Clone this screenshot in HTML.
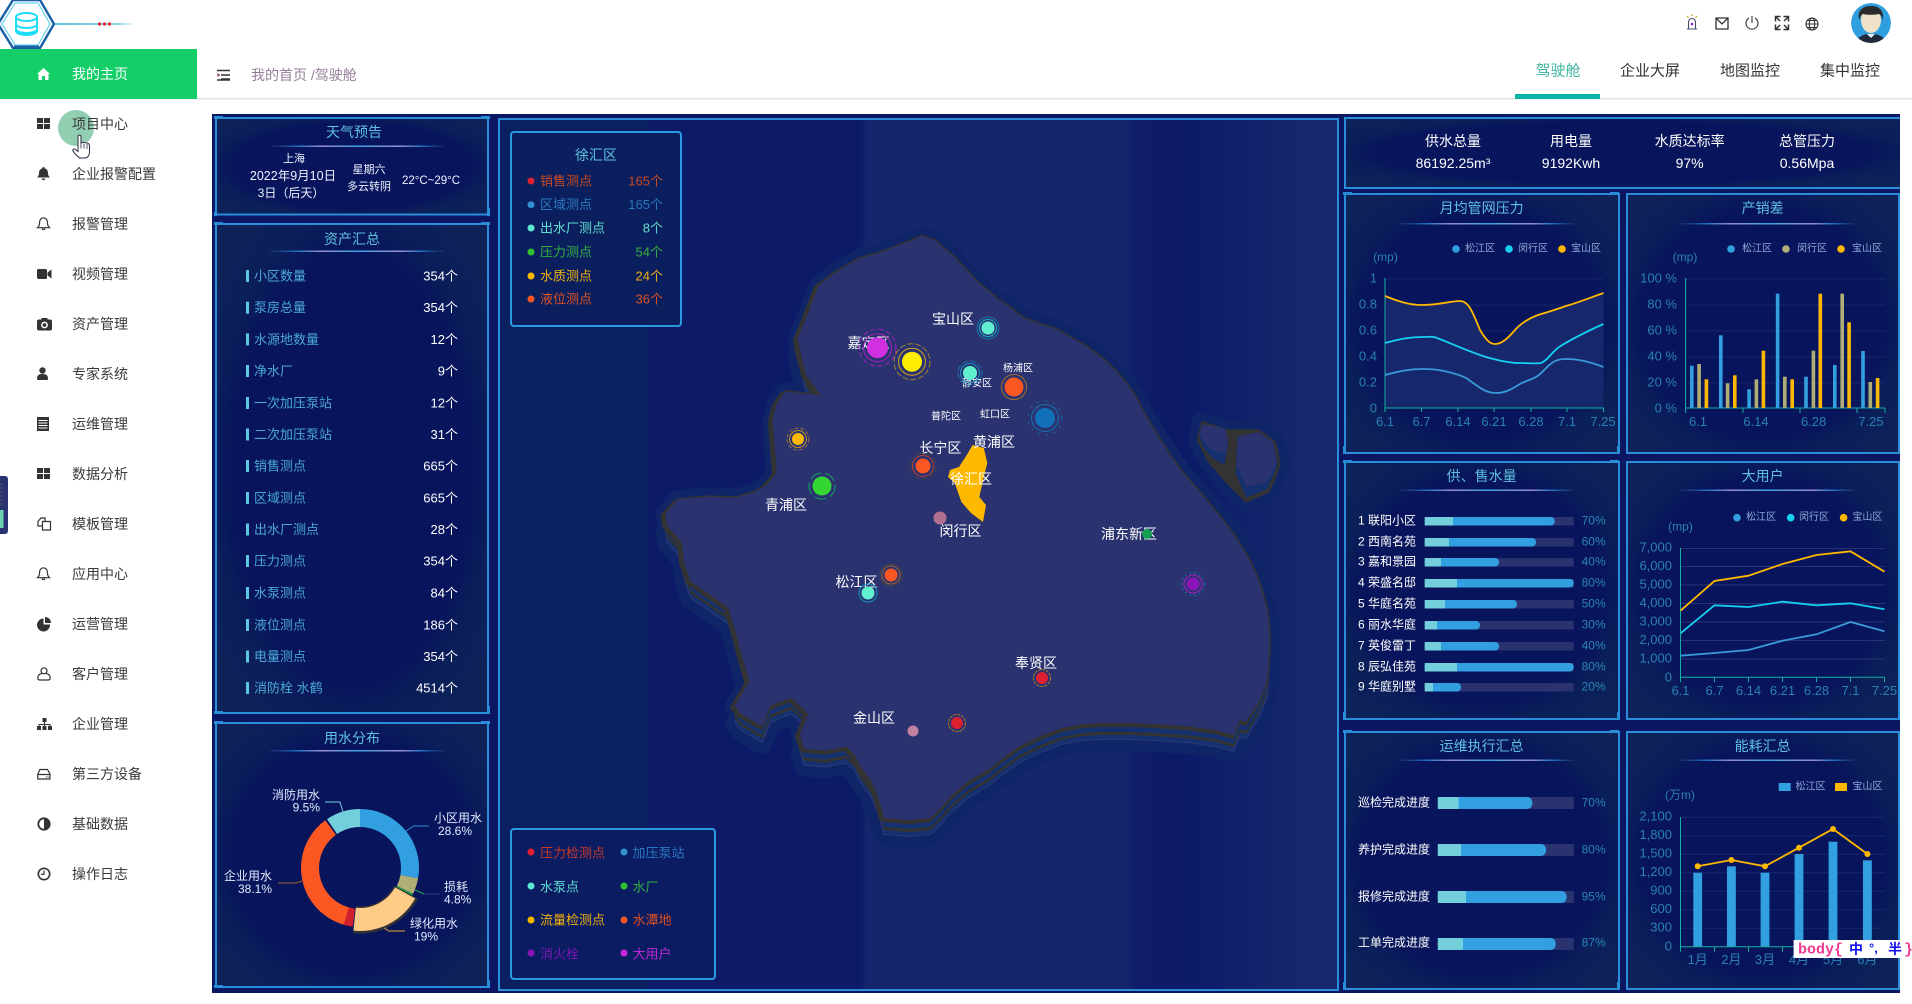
<!DOCTYPE html>
<html lang="zh"><head><meta charset="utf-8"><title>驾驶舱</title>
<style>
html,body{margin:0;padding:0;background:#fff;width:1912px;height:1004px;overflow:hidden}
svg{display:block;position:absolute;left:0;top:0}
text{font-family:"Liberation Sans","Noto Sans CJK SC",sans-serif;dominant-baseline:central;font-size:13px}
.nav text{font-size:14px;fill:#3a3a3a}
.t{font-size:14px;fill:#5fc0e0;text-anchor:middle}
.a{fill:#4aa8d8}
.v{fill:#fff;text-anchor:end}
.l{font-size:14px;fill:#fff;text-anchor:middle}
.s{font-size:10px;fill:#fff;text-anchor:middle}
.ax{font-size:13px;fill:#2a80b4}
.axe{font-size:13px;fill:#2a80b4;text-anchor:end}
.axm{font-size:13px;fill:#2a80b4;text-anchor:middle}
.lg{font-size:10px;fill:#8fa8d8}
.w{font-size:12px;fill:#fff}
.d{font-size:12px;fill:#e2eaff}
.p{font-size:12px;fill:#2a85b8}
.grid{stroke:#1f2c70;stroke-width:1}
.ring{fill:none;stroke-width:1}
.ico{fill:#333}
.icl{fill:none;stroke:#333;stroke-width:1.2}
.tab{font-size:15px;fill:#333;text-anchor:middle}
</style></head><body>
<svg width="1912" height="1004" viewBox="0 0 1912 1004" xmlns="http://www.w3.org/2000/svg">
<defs>
<radialGradient id="pg" cx="50%" cy="50%" r="65%"><stop offset="0" stop-color="#08155c"/><stop offset=".68" stop-color="#08155c"/><stop offset=".82" stop-color="#0b2059"/><stop offset="1" stop-color="#0c2259"/></radialGradient>
<linearGradient id="ul"><stop offset="0" stop-color="#2a3a80" stop-opacity=".4"/><stop offset=".15" stop-color="#1a70c0"/><stop offset=".3" stop-color="#9a8fd0"/><stop offset=".5" stop-color="#3aa0e0"/><stop offset=".75" stop-color="#9a8fd0"/><stop offset=".88" stop-color="#1a70c0"/><stop offset="1" stop-color="#2a3a80" stop-opacity=".4"/></linearGradient>
<linearGradient id="ln"><stop offset="0" stop-color="#5cc3dc"/><stop offset=".8" stop-color="#8fd8ea"/><stop offset="1" stop-color="#e0f6fb"/></linearGradient>
<linearGradient id="mb" gradientUnits="userSpaceOnUse" x1="498" x2="1338" y1="0" y2="0">
<stop offset="0" stop-color="#0c1a68"/><stop offset=".43" stop-color="#0c1a68"/><stop offset=".44" stop-color="#15266e"/><stop offset=".745" stop-color="#15266e"/><stop offset=".76" stop-color="#0e1c69"/><stop offset=".81" stop-color="#0c1a68"/><stop offset=".87" stop-color="#0f1f6a"/><stop offset=".95" stop-color="#16276e"/><stop offset="1" stop-color="#16276e"/></linearGradient>
<clipPath id="av"><circle cx="1871" cy="23" r="20"/></clipPath>
<polygon id="land" points="670,40 700,50 745,90 800,150 850,195 880,215 910,240 950,255 990,268 1060,310 1100,340 1130,370 1155,400 1175,430 1200,478 1230,530 1260,578 1290,620 1340,680 1380,730 1410,770 1440,820 1460,860 1478,910 1490,960 1495,1010 1495,1050 1490,1130 1470,1180 1440,1230 1425,1225 1410,1262 1370,1250 1300,1240 1225,1235 1160,1232 1100,1232 1050,1235 1000,1245 950,1265 900,1290 860,1320 830,1345 780,1375 740,1410 715,1440 690,1465 640,1470 580,1465 565,1410 550,1375 525,1340 510,1310 490,1290 440,1300 390,1295 380,1260 400,1210 360,1170 310,1190 290,1240 240,1210 225,1190 260,1130 240,1060 225,1000 210,950 120,885 105,840 100,790 65,750 60,720 90,685 160,678 230,680 270,668 300,650 325,620 320,550 315,490 325,450 345,420 430,430 395,380 380,320 375,290 395,240 425,160 470,125 520,95 570,80 610,65"/>
</defs>

<!-- header -->
<rect x="0" y="98" width="1912" height="1.5" fill="#e4e6ef"/>
<polygon points="-2,24 13,0 40,0 54,24 40,48 13,48" fill="#fff" stroke="#1c5fa6" stroke-width="2.4"/>
<polygon points="2,24 15,3 38,3 50,24 38,45 15,45" fill="none" stroke="#62d4ee" stroke-width="1.2"/>
<rect x="14" y="45.5" width="25" height="3" fill="#1c5fa6"/>
<g fill="none" stroke="#1ddcf5" stroke-width="2">
<ellipse cx="26.5" cy="17" rx="10.5" ry="4"/>
<path d="M16 17v14c0 2.3 4.7 4 10.5 4s10.500-1.700 10.500-4V17M16 24c0 2.300 4.700 4 10.500 4s10.500-1.700 10.500-4M16 29c0 2.300 4.700 4 10.500 4s10.500-1.700 10.500-4"/>
</g>
<rect x="55" y="23" width="77" height="2" fill="url(#ln)"/>
<g fill="#e0242a"><circle cx="99.500" cy="24" r="1.600"/><circle cx="104.500" cy="24" r="1.600"/><circle cx="109.500" cy="24" r="1.600"/></g>

<rect x="0" y="49" width="197" height="50" fill="#14cf68"/>
<g class="nav">
<text x="72" y="74" style="fill:#fff">我的主页</text>
<circle cx="76" cy="128" r="18" fill="#92cfb2"/>
<text x="72" y="124">项目中心</text><text x="72" y="174">企业报警配置</text><text x="72" y="224">报警管理</text><text x="72" y="274">视频管理</text><text x="72" y="324">资产管理</text><text x="72" y="374">专家系统</text><text x="72" y="424">运维管理</text><text x="72" y="474">数据分析</text><text x="72" y="524">模板管理</text><text x="72" y="574">应用中心</text><text x="72" y="624">运营管理</text><text x="72" y="674">客户管理</text><text x="72" y="724">企业管理</text><text x="72" y="774">第三方设备</text><text x="72" y="824">基础数据</text><text x="72" y="874">操作日志</text>
</g>
<!-- nav icons -->
<g transform="translate(37,67)"><path fill="#fff" d="M6.500 1L13 7H11.500V13H8V9H5V13H1.500V7H0Z"/></g>
<g transform="translate(37,117)" class="ico"><rect y="1" width="6" height="5"/><rect x="7" y="1" width="6" height="5"/><rect y="7" width="6" height="5"/><rect x="7" y="7" width="6" height="5"/></g>
<g transform="translate(37,167)" class="ico"><path d="M6.500 0a1 1 0 0 1 1 1.200c2.500.6 3.500 2.600 3.500 5 0 2 1 3.300 2 4.300H0c1-1 2-2.300 2-4.300 0-2.400 1-4.400 3.500-5a1 1 0 0 1 1-1.200zM4.800 11.500h3.400a1.700 1.700 0 0 1-3.400 0z"/></g>
<g transform="translate(37,217)" class="icl"><path d="M6.500 .8c2.800.3 4 2.500 4 5.200 0 2.200.8 3.600 2 4.700H.5c1.200-1.100 2-2.500 2-4.700 0-2.700 1.200-4.900 4-5.200zM5 11.500a1.600 1.600 0 0 0 3 0"/></g>
<g transform="translate(37,267)" class="ico"><rect y="2" width="10" height="10" rx="1.500"/><polygon points="10.500,5.500 14.500,2.500 14.500,11.500 10.500,8.500"/></g>
<g transform="translate(37,317)"><rect y="2.500" width="15" height="11" rx="2" fill="#333"/><rect x="4.500" y="1" width="6" height="3" fill="#333"/><circle cx="7.500" cy="8" r="3.400" fill="#fff"/><circle cx="7.500" cy="8" r="1.900" fill="#333"/></g>
<g transform="translate(37,367)" class="ico"><circle cx="5.500" cy="3.500" r="3.200"/><path d="M0 12c0-3.500 1.500-5 5.500-5s5.500 1.500 5.500 5c0 .8-.6 1-1.500 1h-8C.6 13 0 12.800 0 12z"/></g>
<g transform="translate(37,417)"><rect width="12" height="14" fill="#333"/><path d="M1.500 3.500h9M1.500 6h9M1.500 8.500h9M1.500 11h9" stroke="#fff" stroke-width="1"/></g>
<g transform="translate(37,467)" class="ico"><rect y="1" width="6" height="5"/><rect x="7" y="1" width="6" height="5"/><rect y="7" width="6" height="5"/><rect x="7" y="7" width="6" height="5"/></g>
<g transform="translate(37,517)" class="icl"><path d="M5.500 4.500H13.500V13H5.500ZM5.500 9H1V4.500L4 1H8V4.500"/></g>
<g transform="translate(37,567)" class="icl"><path d="M6.500 .8c2.800.3 4 2.500 4 5.200 0 2.200.8 3.600 2 4.700H.5c1.200-1.100 2-2.500 2-4.700 0-2.700 1.200-4.900 4-5.200zM5 11.500a1.600 1.600 0 0 0 3 0"/></g>
<g transform="translate(37,617)" class="ico"><path d="M6.500 1.500V7.500H13A6.500 6.500 0 1 1 6.500 1.500zM8 0a6 6 0 0 1 6 6H8z"/></g>
<g transform="translate(37,667)" class="icl"><circle cx="7" cy="3.800" r="3"/><path d="M4.800 6.500C2 7 .8 8.500.8 11c0 1.300.7 2 2 2h8.400c1.300 0 2-.7 2-2 0-2.500-1.200-4-4-4.500"/></g>
<g transform="translate(37,717)" class="ico"><rect x="5.500" y="1" width="4" height="4"/><rect y="9" width="4" height="4"/><rect x="5.500" y="9" width="4" height="4"/><rect x="11" y="9" width="4" height="4"/><path d="M7 5h1v2h5.500v2h-1V8H8v1H7V8H2.500v1h-1V7H7z"/></g>
<g transform="translate(37,767)" class="icl"><path d="M3 2.500H10.500L13 7V12H.8V7ZM.8 7.500H13"/><path d="M9 10h1.500M11.300 10h.7" stroke-width="1"/></g>
<g transform="translate(37,817)"><circle cx="7" cy="7" r="5.700" fill="#fff" stroke="#333" stroke-width="1.800"/><path d="M7 1.300a5.700 5.700 0 0 1 0 11.400z" fill="#333"/></g>
<g transform="translate(37,867)" class="icl"><circle cx="7" cy="7" r="5.700" stroke-width="1.600"/><path d="M7 3.500V7.300H3.800"/></g>

<!-- hand cursor -->
<g transform="translate(72,135)"><path d="M6 2c0-2.500 3-2.500 3 0v6c2-1 5-.5 5.500 0 1.500 0 2.800.500 3 3v6c0 3-1.500 5-3.500 6H8c-2-1-6-5-7-7-.7-1.500 1-3 2.500-1.500L6 16.500z" fill="#fff" stroke="#2a2a40" stroke-width="1"/><path d="M9 8.500v5M12 8.500v5M15 9v5" stroke="#2a2a40" stroke-width=".8"/></g>
<!-- left drawer tab -->
<rect x="-6" y="476" width="14" height="58" rx="3" fill="#2a3270"/>
<rect x="0" y="510" width="3.500" height="18" fill="#6bd3b0"/>
<path d="M0 484h3M0 488h3M0 492h3M0 496h3M0 500h3M0 504h3" stroke="#556" stroke-width="1"/>

<!-- breadcrumb -->
<path d="M217 70.500h13M221 75h9M221 79h9M217 80h13" stroke="#333" stroke-width="1.400" fill="none"/>
<path d="M217.500 73l3 2-3 2z" fill="#9a4070"/>
<text x="251" y="75" style="font-size:14px;fill:#957f98">我的首页 /驾驶舱</text>

<!-- tabs -->
<text class="tab" x="1558" y="71" style="fill:#3fb59f">驾驶舱</text>
<rect x="1515" y="94" width="85" height="5" fill="#0db3a6"/>
<text class="tab" x="1650" y="71">企业大屏</text><text class="tab" x="1750" y="71">地图监控</text><text class="tab" x="1850" y="71">集中监控</text>

<!-- top icons -->
<g fill="none" stroke="#333" stroke-width="1.100">
<path d="M1687 29h10M1688.500 29v-7a3.500 3.500 0 0 1 7 0v7" stroke="#4a4a6a"/><path d="M1692 14v2M1687 16l1.500 1.500M1697 16l-1.500 1.500" stroke="#c8a020"/><circle cx="1692" cy="24" r="1.300" fill="#8020d0" stroke="none"/>
<path d="M1716 18h12v11h-12zM1716.500 18.500l5.500 5.500 5.500-5.500" stroke-width="1.300"/>
<path d="M1749 18a6 6 0 1 0 6 0M1752 16v7"/>
<path d="M1775.500 21.500v-5h5M1788.500 21.500v-5h-5M1775.500 24.500v5h5M1788.500 24.500v5h-5M1776 17l4 4M1788 17l-4 4M1776 29l4-4M1788 29l-4-4" stroke-width="1.500"/>
<circle cx="1812" cy="24" r="6"/><ellipse cx="1812" cy="24" rx="2.700" ry="6"/><path d="M1806 24h12M1807 20.500h10M1807 27.500h10"/>
</g>
<!-- avatar -->
<g clip-path="url(#av)"><circle cx="1871" cy="23" r="20" fill="#2f9fe0"/><ellipse cx="1871" cy="20" rx="10" ry="13" fill="#efe2c8"/><path d="M1859 20c-2-10 4-14 12-14s13 4 12 14c-1-3-2-5-4-6-5 1-12 1-16 0-2 1-3 3-4 6z" fill="#2b2b2b"/><path d="M1855 44c2-7 8-9 12-10l4 4 4-4c4 1 10 3 12 10z" fill="#20283a"/><path d="M1867 34l4 4 4-4-2 0h-4z" fill="#e8eef8"/></g>

<!-- dashboard background -->
<rect x="212" y="114" width="1688" height="879" fill="#0b1763"/>

<!-- map panel -->
<rect x="498" y="118" width="840" height="872" fill="url(#mb)"/>
<rect x="498" y="118" width="150" height="872" fill="#0b2060"/>
<!-- land, traced in crop coordinates -->
<g transform="translate(640,220) scale(.4209,.4082)">
<g stroke-linejoin="round">
<use href="#land" transform="translate(0,45)" fill="#102568" stroke="#102568" stroke-width="46"/>
<use href="#land" fill="#102568" stroke="#102568" stroke-width="46"/>
<use href="#land" transform="translate(0,40)" fill="#15306e" stroke="#2a3a78" stroke-width="2.500"/>
<use href="#land" transform="translate(0,28)" fill="#333" stroke="#333" stroke-width="2.500"/>
<use href="#land" transform="translate(0,22)" fill="#15306e"/>
<use href="#land" transform="translate(0,10)" fill="#333"/>
<use href="#land" transform="translate(-9,4)" fill="#333" stroke="#333" stroke-width="5"/>
<use href="#land" fill="#333" stroke="#333" stroke-width="7"/>
<use href="#land" fill="#2a3370"/>
</g>
<!-- island -->
<polygon points="1335,495 1400,515 1470,515 1510,545 1520,600 1495,665 1440,690 1400,650 1350,590 1325,540" fill="#102568" stroke="#102568" stroke-width="46" stroke-linejoin="round"/>
<polygon points="1335,495 1400,515 1470,515 1510,545 1520,600 1495,665 1440,690 1400,650 1350,590 1325,540" fill="#333" stroke="#333" stroke-width="4" stroke-linejoin="round"/>
<polygon points="1335,500 1390,510 1397,550 1388,600 1362,585 1340,560 1328,530" fill="#15306e"/>
<polygon points="1335,500 1390,510 1397,540 1392,570 1362,565 1340,545 1330,525" fill="#2a3370"/>
<polygon points="1420,530 1470,520 1505,545 1515,600 1490,660 1440,680 1415,620" fill="#15306e"/>
<polygon points="1420,530 1470,520 1505,545 1512,600 1490,640 1440,655 1418,600" fill="#2a3370"/>
</g>
<polygon points="972.600,445 983.800,448 987.300,463 983.800,477 979.300,497 986,505 983,522 971,513 961.400,502 954.700,483 948,477 950,470 959,467 968,453" fill="#ffb800"/>

<!-- map labels -->
<text class="l" x="953" y="319">宝山区</text><text class="l" x="868.600" y="343">嘉定区</text><text class="l" x="786" y="505">青浦区</text><text class="l" x="940.400" y="448">长宁区</text><text class="l" x="994" y="442">黄浦区</text><text class="l" x="971" y="479">徐汇区</text><text class="l" x="960.500" y="531">闵行区</text><text class="l" x="1129" y="534">浦东新区</text><text class="l" x="856.500" y="582">松江区</text><text class="l" x="1036" y="663">奉贤区</text><text class="l" x="874" y="718">金山区</text>
<text class="s" x="1018" y="369">杨浦区</text><text class="s" x="977" y="384">静安区</text><text class="s" x="946" y="417">普陀区</text><text class="s" x="995" y="415">虹口区</text>
<!-- markers -->
<circle cx="877.500" cy="347.700" r="10.500" fill="#d030e0"/><circle class="ring" cx="877.500" cy="347.700" r="14" stroke="#a020c0"/><circle class="ring" cx="877.500" cy="347.700" r="18.500" stroke="#a020c0" stroke-dasharray="5 3"/>
<circle cx="912" cy="361.700" r="10" fill="#ffee00"/><circle class="ring" cx="912" cy="361.700" r="13.500" stroke="#d0a020"/><circle class="ring" cx="912" cy="361.700" r="18" stroke="#a08030" stroke-dasharray="6 2"/>
<circle cx="988" cy="328" r="6.500" fill="#60f0d0"/><circle class="ring" cx="988" cy="328" r="8.500" stroke="#1ab0c0"/><circle class="ring" cx="988" cy="328" r="11" stroke="#1a70b0"/>
<circle cx="970" cy="373" r="7" fill="#60f0d0"/><circle class="ring" cx="970" cy="373" r="9.500" stroke="#1a90c0"/><circle class="ring" cx="970" cy="373" r="12" stroke="#1a70b0" stroke-dasharray="6 2"/>
<circle cx="1014" cy="387" r="9.500" fill="#fa5722"/><circle class="ring" cx="1014" cy="387" r="12.500" stroke="#a07030"/>
<circle cx="1045" cy="418" r="10" fill="#1170b8"/><circle class="ring" cx="1045" cy="418" r="13.500" stroke="#1a70b0"/><circle class="ring" cx="1045" cy="418" r="17" stroke="#1a70b0" stroke-dasharray="2 6"/>
<circle cx="798" cy="439" r="6" fill="#ffb800"/><circle class="ring" cx="798" cy="439" r="8.500" stroke="#c09030"/><circle class="ring" cx="798" cy="439" r="11" stroke="#907040" stroke-dasharray="4 2"/>
<circle cx="822" cy="486" r="9.500" fill="#33d633"/><circle class="ring" cx="822" cy="486" r="13" stroke="#18a060" stroke-dasharray="12 4"/>
<circle cx="923" cy="466" r="7.500" fill="#fa5722"/><circle class="ring" cx="923" cy="466" r="10.500" stroke="#c04030"/><circle class="ring" cx="923" cy="466" r="13" stroke="#444" stroke-dasharray="6 2"/>
<circle cx="940" cy="518" r="6.500" fill="#b07090"/>
<circle cx="1147" cy="534" r="5" fill="#14a050"/>
<circle cx="1193" cy="584" r="6.500" fill="#8a14b8"/><circle class="ring" cx="1193" cy="584" r="9" stroke="#a020c0"/><circle class="ring" cx="1193" cy="584" r="11.500" stroke="#1a70b0" stroke-dasharray="2 3"/>
<circle cx="891" cy="575" r="6.500" fill="#fa5722"/><circle class="ring" cx="891" cy="575" r="9" stroke="#a06030"/><circle class="ring" cx="891" cy="575" r="11" stroke="#444"/>
<circle cx="868" cy="593" r="6.500" fill="#60f0d0"/><circle class="ring" cx="868" cy="593" r="9" stroke="#1a90c0"/>
<circle cx="1042" cy="678" r="6" fill="#dc2030"/><circle class="ring" cx="1042" cy="678" r="8.500" stroke="#b07820" stroke-dasharray="3 1"/>
<circle cx="957" cy="723" r="6" fill="#dc2030"/><circle class="ring" cx="957" cy="723" r="8.500" stroke="#b07820" stroke-dasharray="3 1"/>
<circle cx="913" cy="731" r="5.500" fill="#c080a0"/>
<!-- map border -->
<rect x="499" y="119" width="839" height="871" fill="none" stroke="#2a8dd8" stroke-width="2"/>

<!-- legend 1 -->
<rect x="511" y="132" width="170" height="194" rx="3" fill="#0b1f5e" stroke="#2a9ae0" stroke-width="2"/>
<text class="t" x="596" y="155">徐汇区</text>
<circle cx="531" cy="181" r="3.500" fill="#dc2030"/><text x="540" y="181" fill="#c84a22">销售测点</text><text x="663" y="181" text-anchor="end" fill="#c84a22">165个</text>
<circle cx="531" cy="204.700" r="3.500" fill="#2f8fd0"/><text x="540" y="204.700" fill="#2a78c0">区域测点</text><text x="663" y="204.700" text-anchor="end" fill="#2a78c0">165个</text>
<circle cx="531" cy="228" r="3.500" fill="#5fe8d0"/><text x="540" y="228" fill="#5fe0d0">出水厂测点</text><text x="663" y="228" text-anchor="end" fill="#5fe0d0">8个</text>
<circle cx="531" cy="252" r="3.500" fill="#33c033"/><text x="540" y="252" fill="#33b040">压力测点</text><text x="663" y="252" text-anchor="end" fill="#33b040">54个</text>
<circle cx="531" cy="276" r="3.500" fill="#ffb800"/><text x="540" y="276" fill="#f0b010">水质测点</text><text x="663" y="276" text-anchor="end" fill="#f0b010">24个</text>
<circle cx="531" cy="299" r="3.500" fill="#fa5722"/><text x="540" y="299" fill="#e05020">液位测点</text><text x="663" y="299" text-anchor="end" fill="#e05020">36个</text>

<!-- legend 2 -->
<rect x="511" y="829" width="204" height="150" rx="3" fill="#0b1c62" stroke="#2a9ae0" stroke-width="2"/>
<circle cx="531" cy="852" r="3.500" fill="#dc2030"/><text x="540" y="853" fill="#c83a28">压力检测点</text>
<circle cx="624" cy="852" r="3.500" fill="#2f8fd0"/><text x="632.500" y="853" fill="#2a78c0">加压泵站</text>
<circle cx="531" cy="886" r="3.500" fill="#5fe8d0"/><text x="540" y="887" fill="#5fe0d0">水泵点</text>
<circle cx="624" cy="886" r="3.500" fill="#33c033"/><text x="632.500" y="887" fill="#33b040">水厂</text>
<circle cx="531" cy="920" r="3.500" fill="#ffb800"/><text x="540" y="920" fill="#f0b010">流量检测点</text>
<circle cx="624" cy="920" r="3.500" fill="#fa5722"/><text x="632.500" y="920" fill="#e05020">水潭地</text>
<circle cx="531" cy="953" r="3.500" fill="#8a14b8"/><text x="540" y="954" fill="#7a18b0">消火栓</text>
<circle cx="624" cy="953" r="3.500" fill="#c828e0"/><text x="632.500" y="954" fill="#c028d8">大用户</text>

<!-- panels -->
<g fill="url(#pg)" stroke="#2a8dd8" stroke-width="2">
<rect x="216" y="118" width="272" height="96.500"/>
<rect x="216" y="224" width="272" height="489"/>
<rect x="216" y="723" width="272" height="264"/>
<rect x="1345" y="118" width="556" height="70"/>
<rect x="1345" y="194" width="274" height="259"/>
<rect x="1627" y="194" width="272" height="259"/>
<rect x="1345" y="462" width="274" height="257"/>
<rect x="1627" y="462" width="272" height="257"/>
<rect x="1345" y="732" width="274" height="257"/>
<rect x="1627" y="732" width="272" height="257"/>
</g>
<rect x="1900" y="114" width="12" height="880" fill="#fff"/>
<!-- corner tabs -->
<g fill="#2a8dd8">
<rect x="214" y="116" width="9" height="3"/><rect x="481" y="116" width="9" height="3"/><rect x="214" y="212" width="3" height="4"/><rect x="487" y="208" width="3" height="8"/>
<rect x="214" y="222" width="9" height="3"/><rect x="481" y="222" width="9" height="3"/><rect x="214" y="711" width="9" height="3"/><rect x="487" y="706" width="3" height="8"/>
<rect x="214" y="721" width="9" height="3"/><rect x="481" y="721" width="9" height="3"/><rect x="214" y="985" width="9" height="3"/><rect x="487" y="980" width="3" height="8"/>
<rect x="1343" y="192" width="9" height="3"/><rect x="1610" y="192" width="9" height="3"/><rect x="1617" y="446" width="3" height="8"/><rect x="1343" y="446" width="3" height="8"/>
<rect x="1343" y="460" width="9" height="3"/><rect x="1610" y="460" width="9" height="3"/><rect x="1617" y="712" width="3" height="8"/><rect x="1343" y="712" width="3" height="8"/>
<rect x="1343" y="730" width="9" height="3"/><rect x="1610" y="730" width="9" height="3"/><rect x="1617" y="982" width="3" height="8"/><rect x="1343" y="982" width="3" height="8"/>
</g>

<!-- titles -->
<text class="t" x="354" y="132">天气预告</text><rect x="271" y="145.500" width="172" height="1.500" fill="url(#ul)"/>
<text class="t" x="352" y="239">资产汇总</text><rect x="270" y="250.500" width="173" height="1.500" fill="url(#ul)"/>
<text class="t" x="352" y="738">用水分布</text><rect x="270" y="750" width="174" height="1.500" fill="url(#ul)"/>
<text class="t" x="1481.600" y="208">月均管网压力</text><rect x="1400" y="223" width="174" height="1.500" fill="url(#ul)"/>
<text class="t" x="1762.600" y="208">产销差</text><rect x="1680" y="223" width="175" height="1.500" fill="url(#ul)"/>
<text class="t" x="1481.600" y="476">供、售水量</text><rect x="1400" y="489.500" width="174" height="1.500" fill="url(#ul)"/>
<text class="t" x="1762.600" y="476">大用户</text><rect x="1680" y="489.500" width="175" height="1.500" fill="url(#ul)"/>
<text class="t" x="1481.600" y="746">运维执行汇总</text><rect x="1400" y="759.500" width="174" height="1.500" fill="url(#ul)"/>
<text class="t" x="1762.600" y="746">能耗汇总</text><rect x="1680" y="759.500" width="175" height="1.500" fill="url(#ul)"/>

<!-- weather -->
<g fill="#eef2ff" text-anchor="middle">
<text x="294" y="159" style="font-size:11px">上海</text>
<text x="293" y="176" style="font-size:12.500px">2022年9月10日</text>
<text x="291" y="193" style="font-size:12px">3日（后天）</text>
<text x="369" y="170" style="font-size:11px">星期六</text>
<text x="369" y="187" style="font-size:11px">多云转阴</text>
<text x="431" y="181" style="font-size:11.500px">22°C~29°C</text>
</g>

<!-- assets -->
<g fill="#5ec8e0"><rect x="246" y="270" width="3" height="12"/><rect x="246" y="301.700" width="3" height="12"/><rect x="246" y="333.400" width="3" height="12"/><rect x="246" y="365" width="3" height="12"/><rect x="246" y="397" width="3" height="12"/><rect x="246" y="428.500" width="3" height="12"/><rect x="246" y="460" width="3" height="12"/><rect x="246" y="492" width="3" height="12"/><rect x="246" y="523.500" width="3" height="12"/><rect x="246" y="555" width="3" height="12"/><rect x="246" y="587" width="3" height="12"/><rect x="246" y="619" width="3" height="12"/><rect x="246" y="650.500" width="3" height="12"/><rect x="246" y="682" width="3" height="12"/></g>
<text class="a" x="254" y="276">小区数量</text><text class="v" x="458" y="276">354个</text>
<text class="a" x="254" y="307.700">泵房总量</text><text class="v" x="458" y="307.700">354个</text>
<text class="a" x="254" y="339.400">水源地数量</text><text class="v" x="458" y="339.400">12个</text>
<text class="a" x="254" y="371">净水厂</text><text class="v" x="458" y="371">9个</text>
<text class="a" x="254" y="403">一次加压泵站</text><text class="v" x="458" y="403">12个</text>
<text class="a" x="254" y="434.500">二次加压泵站</text><text class="v" x="458" y="434.500">31个</text>
<text class="a" x="254" y="466">销售测点</text><text class="v" x="458" y="466">665个</text>
<text class="a" x="254" y="498">区域测点</text><text class="v" x="458" y="498">665个</text>
<text class="a" x="254" y="529.500">出水厂测点</text><text class="v" x="458" y="529.500">28个</text>
<text class="a" x="254" y="561">压力测点</text><text class="v" x="458" y="561">354个</text>
<text class="a" x="254" y="593">水泵测点</text><text class="v" x="458" y="593">84个</text>
<text class="a" x="254" y="625">液位测点</text><text class="v" x="458" y="625">186个</text>
<text class="a" x="254" y="656.500">电量测点</text><text class="v" x="458" y="656.500">354个</text>
<text class="a" x="254" y="688">消防栓 水鹤</text><text class="v" x="458" y="688">4514个</text>

<!-- donut -->
<g fill="none">
<circle cx="360" cy="868" r="50" stroke="#32a0e0" stroke-width="18" pathLength="360" stroke-dasharray="100 260" transform="rotate(-90 360 868)"/>
<circle cx="360" cy="868" r="50" stroke="#afaf75" stroke-width="18" pathLength="360" stroke-dasharray="16 344" transform="rotate(10 360 868)"/>
<circle cx="360" cy="868" r="50" stroke="#1f9a48" stroke-width="18" pathLength="360" stroke-dasharray="2 358" transform="rotate(26 360 868)"/>
<circle cx="360" cy="868" r="50" stroke="#fa5722" stroke-width="18" pathLength="360" stroke-dasharray="135 225" transform="rotate(99 360 868)"/>
<circle cx="360" cy="868" r="50" stroke="#cf2030" stroke-width="18" pathLength="360" stroke-dasharray="9 351" transform="rotate(97 360 868)"/>
<circle cx="360" cy="868" r="50" stroke="#74cfdc" stroke-width="18" pathLength="360" stroke-dasharray="34 326" transform="rotate(236 360 868)"/>
<circle cx="360" cy="868" r="52" stroke="#333" stroke-width="27" pathLength="360" stroke-dasharray="68 292" transform="rotate(28 360 868)"/>
<circle cx="360" cy="868" r="51.500" stroke="#ffcc88" stroke-width="23" pathLength="360" stroke-dasharray="67 293" transform="rotate(29 360 868)"/>
<path d="M325 802H340L343 812" stroke="#74cfdc"/>
<path d="M429 826H414L406 831" stroke="#2a8ed0"/>
<path d="M440 894H424L415 890" stroke="#2a3a80"/><path d="M424 894L415 890" stroke="#1f9a48"/>
<path d="M405 931H389L384 928" stroke="#a07840" stroke-width="1.500"/>
<path d="M278 883H296L302 881" stroke="#a06030"/>
</g>
<text class="d" x="320" y="795" text-anchor="end">消防用水</text><text class="d" x="320" y="807.500" text-anchor="end">9.5%</text>
<text class="d" x="482" y="818" text-anchor="end">小区用水</text><text class="d" x="472" y="831" text-anchor="end">28.6%</text>
<text class="d" x="444" y="887">损耗</text><text class="d" x="444" y="899.500">4.8%</text>
<text class="d" x="410" y="923.500">绿化用水</text><text class="d" x="414" y="936.500">19%</text>
<text class="d" x="272" y="876" text-anchor="end">企业用水</text><text class="d" x="272" y="889" text-anchor="end">38.1%</text>

<!-- stats -->
<g fill="#fff" text-anchor="middle" style="font-size:14px">
<text x="1453" y="141" style="font-size:14px">供水总量</text><text x="1453" y="163" style="font-size:14px">86192.25m³</text>
<text x="1571" y="141" style="font-size:14px">用电量</text><text x="1571" y="163" style="font-size:14px">9192Kwh</text>
<text x="1689.600" y="141" style="font-size:14px">水质达标率</text><text x="1689.600" y="163" style="font-size:14px">97%</text>
<text x="1807" y="141" style="font-size:14px">总管压力</text><text x="1807" y="163" style="font-size:14px">0.56Mpa</text>
</g>

<!-- chart 月均 -->
<path fill="#17276c" d="M1385 296 C1400 302 1410 305 1422 305 C1440 305 1450 301 1460 301 C1468 301 1472 310 1480 330 C1486 340 1490 344 1495 344 C1502 344 1508 338 1515 330 C1522 322 1530 318 1538 315 C1555 310 1566 306 1566 306 C1580 302 1592 297 1603.500 293 L1603.500 408 L1385 408Z"/>
<path d="M1385 279H1603M1385 305H1603M1385 331H1603M1385 357H1603M1385 383H1603" class="grid" opacity=".7"/>
<path d="M1385 278V408H1603.500M1385 408v4M1421.500 408v4M1458 408v4M1494 408v4M1531 408v4M1567 408v4M1603.500 408v4" stroke="#12b0a0" fill="none"/>
<g fill="none" stroke-width="1.800">
<path stroke="#ffb800" d="M1385 296 C1400 302 1410 305 1422 305 C1440 305 1450 301 1460 301 C1468 301 1472 310 1480 330 C1486 340 1490 344 1495 344 C1502 344 1508 338 1515 330 C1522 322 1530 318 1538 315 C1555 310 1566 306 1566 306 C1580 302 1592 297 1603.500 293"/>
<path stroke="#15d0f0" d="M1385 343 C1400 339 1410 337 1422 337 C1430 337 1432 336 1437 338 C1455 345 1470 352 1486 357 C1500 361 1510 363 1519 363 C1530 363 1536 364 1541 363 C1547 361 1552 352 1559 347 C1575 337 1590 330 1603.500 324"/>
<path stroke="#3a9ad9" d="M1385 375 C1400 371 1410 369 1422 369 C1430 369 1432 369 1438.500 370 C1450 372 1458 374 1466 378 C1478 386 1484 393 1497 393 C1505 393 1512 389 1520 384 C1530 379 1534 379 1539 375 C1548 367 1552 359 1565 359 C1580 359 1590 362 1603.500 367"/>
</g>
<text class="axm" x="1385.500" y="257" style="font-size:12px">(mp)</text>
<text class="axe" x="1377" y="278">1</text><text class="axe" x="1377" y="304">0.8</text><text class="axe" x="1377" y="330">0.6</text><text class="axe" x="1377" y="356">0.4</text><text class="axe" x="1377" y="382">0.2</text><text class="axe" x="1377" y="408">0</text>
<text class="axm" x="1385" y="421.500">6.1</text><text class="axm" x="1421.500" y="421.500">6.7</text><text class="axm" x="1458" y="421.500">6.14</text><text class="axm" x="1494" y="421.500">6.21</text><text class="axm" x="1531" y="421.500">6.28</text><text class="axm" x="1567" y="421.500">7.1</text><text class="axm" x="1603" y="421.500">7.25</text>
<circle cx="1456" cy="249" r="3.800" fill="#32a0e0"/><text class="lg" x="1465" y="249">松江区</text>
<circle cx="1509" cy="249" r="3.800" fill="#15d0f0"/><text class="lg" x="1518" y="249">闵行区</text>
<circle cx="1562" cy="249" r="3.800" fill="#ffb800"/><text class="lg" x="1571" y="249">宝山区</text>

<!-- chart 产销差 -->
<path d="M1686 279H1885M1686 305H1885M1686 331H1885M1686 357H1885M1686 383H1885" class="grid" opacity=".7"/>
<path d="M1685.600 278V408H1885M1685.600 408v5M1743 408v5M1800 408v5M1857 408v5M1885 408v5" stroke="#12b0a0" fill="none"/>
<g fill="#32a0e0"><rect x="1690" y="365.700" width="3.600" height="42.300"/><rect x="1719" y="335.300" width="3.600" height="72.700"/><rect x="1747.300" y="389.300" width="3.600" height="18.700"/><rect x="1775.800" y="293.700" width="3.600" height="114.300"/><rect x="1804.200" y="376.700" width="3.600" height="31.300"/><rect x="1833" y="365" width="3.600" height="43"/><rect x="1861.200" y="351" width="3.600" height="57"/></g>
<g fill="#afaf75"><rect x="1697.300" y="364" width="3.600" height="44"/><rect x="1725.800" y="383.300" width="3.600" height="24.700"/><rect x="1754.600" y="379.300" width="3.600" height="28.700"/><rect x="1783" y="376.700" width="3.600" height="31.300"/><rect x="1811.600" y="350.700" width="3.600" height="57.300"/><rect x="1840.400" y="293.700" width="3.600" height="114.300"/><rect x="1868.500" y="382" width="3.600" height="26"/></g>
<g fill="#ffb800"><rect x="1704.600" y="379.300" width="3.600" height="28.700"/><rect x="1733" y="375.300" width="3.600" height="32.700"/><rect x="1761.600" y="350.700" width="3.600" height="57.300"/><rect x="1790.400" y="379.300" width="3.600" height="28.700"/><rect x="1818.500" y="293.700" width="3.600" height="114.300"/><rect x="1847.300" y="322.300" width="3.600" height="85.700"/><rect x="1875.800" y="378" width="3.600" height="30"/></g>
<text class="axm" x="1685" y="257" style="font-size:12px">(mp)</text>
<text class="axe" x="1677" y="278">100 %</text><text class="axe" x="1677" y="304">80 %</text><text class="axe" x="1677" y="330">60 %</text><text class="axe" x="1677" y="356">40 %</text><text class="axe" x="1677" y="382">20 %</text><text class="axe" x="1677" y="408">0 %</text>
<text class="axm" x="1698" y="421.500">6.1</text><text class="axm" x="1756" y="421.500">6.14</text><text class="axm" x="1813.600" y="421.500">6.28</text><text class="axm" x="1871" y="421.500">7.25</text>
<circle cx="1731" cy="249" r="3.800" fill="#32a0e0"/><text class="lg" x="1742" y="249">松江区</text>
<circle cx="1786" cy="249" r="3.800" fill="#afaf75"/><text class="lg" x="1797" y="249">闵行区</text>
<circle cx="1841" cy="249" r="3.800" fill="#ffb800"/><text class="lg" x="1852" y="249">宝山区</text>

<!-- 供售 bars -->
<g fill="#2a3270"><rect x="1424.700" y="517" width="149" height="8.500"/><rect x="1424.700" y="538" width="149" height="8.500"/><rect x="1424.700" y="558" width="149" height="8.500"/><rect x="1424.700" y="579" width="149" height="8.500"/><rect x="1424.700" y="600" width="149" height="8.500"/><rect x="1424.700" y="621" width="149" height="8.500"/><rect x="1424.700" y="642" width="149" height="8.500"/><rect x="1424.700" y="663" width="149" height="8.500"/><rect x="1424.700" y="683" width="149" height="8.500"/></g>
<g fill="#32a0e0"><rect x="1424.700" y="517" width="130" height="8.500" rx="4"/><rect x="1424.700" y="538" width="111.300" height="8.500" rx="4"/><rect x="1424.700" y="558" width="74.300" height="8.500" rx="4"/><rect x="1424.700" y="579" width="149" height="8.500" rx="4"/><rect x="1424.700" y="600" width="92.300" height="8.500" rx="4"/><rect x="1424.700" y="621" width="55.300" height="8.500" rx="4"/><rect x="1424.700" y="642" width="74.300" height="8.500" rx="4"/><rect x="1424.700" y="663" width="149" height="8.500" rx="4"/><rect x="1424.700" y="683" width="36.300" height="8.500" rx="4"/></g>
<g fill="#74cfdc"><rect x="1424.700" y="517" width="28.300" height="8.500"/><rect x="1424.700" y="538" width="24.300" height="8.500"/><rect x="1424.700" y="558" width="16.300" height="8.500"/><rect x="1424.700" y="579" width="32.300" height="8.500"/><rect x="1424.700" y="600" width="20.300" height="8.500"/><rect x="1424.700" y="621" width="12.300" height="8.500"/><rect x="1424.700" y="642" width="16.300" height="8.500"/><rect x="1424.700" y="663" width="32.300" height="8.500"/><rect x="1424.700" y="683" width="8.300" height="8.500"/></g>
<text class="w" x="1358" y="520.700">1 联阳小区</text><text class="p" x="1581.600" y="520.700">70%</text>
<text class="w" x="1358" y="541.700">2 西南名苑</text><text class="p" x="1581.600" y="541.700">60%</text>
<text class="w" x="1358" y="561.700">3 嘉和景园</text><text class="p" x="1581.600" y="561.700">40%</text>
<text class="w" x="1358" y="582.700">4 荣盛名邸</text><text class="p" x="1581.600" y="582.700">80%</text>
<text class="w" x="1358" y="603.700">5 华庭名苑</text><text class="p" x="1581.600" y="603.700">50%</text>
<text class="w" x="1358" y="624.700">6 丽水华庭</text><text class="p" x="1581.600" y="624.700">30%</text>
<text class="w" x="1358" y="645.700">7 英俊雷丁</text><text class="p" x="1581.600" y="645.700">40%</text>
<text class="w" x="1358" y="666.700">8 辰弘佳苑</text><text class="p" x="1581.600" y="666.700">80%</text>
<text class="w" x="1358" y="686.700">9 华庭别墅</text><text class="p" x="1581.600" y="686.700">20%</text>

<!-- 大用户 -->
<path d="M1680.500 548.500H1885M1680.500 566.500H1885M1680.500 585H1885M1680.500 603.500H1885M1680.500 622H1885M1680.500 640.500H1885M1680.500 659H1885" class="grid" style="stroke:#2a3270"/>
<path d="M1680.500 548V677.300H1884.500M1680.500 677v5M1714.500 677v5M1748.500 677v5M1782.500 677v5M1816.500 677v5M1850.500 677v5M1884.500 677v5" stroke="#12b0a0" fill="none"/>
<g fill="none" stroke-width="1.800">
<polyline stroke="#ffb800" points="1680.500,610.700 1714.500,581 1748.500,575.700 1782.500,564 1816.500,555 1850.500,551.300 1884.500,571.700"/>
<polyline stroke="#15d0f0" points="1680.500,633.300 1714.500,605.300 1748.500,607 1782.500,601.700 1816.500,605.300 1850.500,603.300 1884.500,609.300"/>
<polyline stroke="#3a9ad9" points="1680.500,655.700 1714.500,653 1748.500,650 1782.500,640.700 1816.500,634.300 1850.500,622 1884.500,631.300"/>
</g>
<text class="axm" x="1680.500" y="526.700" style="font-size:12px">(mp)</text>
<text class="axe" x="1672" y="547">7,000</text><text class="axe" x="1672" y="565.500">6,000</text><text class="axe" x="1672" y="584">5,000</text><text class="axe" x="1672" y="602.500">4,000</text><text class="axe" x="1672" y="621">3,000</text><text class="axe" x="1672" y="639.500">2,000</text><text class="axe" x="1672" y="658">1,000</text><text class="axe" x="1672" y="677">0</text>
<text class="axm" x="1680.500" y="690.700">6.1</text><text class="axm" x="1714.500" y="690.700">6.7</text><text class="axm" x="1748.500" y="690.700">6.14</text><text class="axm" x="1782.500" y="690.700">6.21</text><text class="axm" x="1816.500" y="690.700">6.28</text><text class="axm" x="1850.500" y="690.700">7.1</text><text class="axm" x="1884.500" y="690.700">7.25</text>
<circle cx="1737" cy="517.700" r="3.800" fill="#32a0e0"/><text class="lg" x="1746" y="517.700">松江区</text>
<circle cx="1790.700" cy="517.700" r="3.800" fill="#15d0f0"/><text class="lg" x="1799" y="517.700">闵行区</text>
<circle cx="1843.600" cy="517.700" r="3.800" fill="#ffb800"/><text class="lg" x="1852.400" y="517.700">宝山区</text>

<!-- 运维 -->
<g fill="#2a3270"><rect x="1437.800" y="797" width="136" height="12"/><rect x="1437.800" y="844" width="136" height="12"/><rect x="1437.800" y="891" width="136" height="12"/><rect x="1437.800" y="938" width="136" height="12"/></g>
<g fill="#32a0e0"><rect x="1437.800" y="797" width="94.500" height="12" rx="5"/><rect x="1437.800" y="844" width="108.200" height="12" rx="5"/><rect x="1437.800" y="891" width="128.800" height="12" rx="5"/><rect x="1437.800" y="938" width="117.900" height="12" rx="5"/></g>
<g fill="#74cfdc"><rect x="1437.800" y="797" width="20.800" height="12"/><rect x="1437.800" y="844" width="23.200" height="12"/><rect x="1437.800" y="891" width="28.200" height="12"/><rect x="1437.800" y="938" width="25.200" height="12"/></g>
<text class="w" x="1358" y="802.700">巡检完成进度</text><text class="p" x="1581.600" y="802.700">70%</text>
<text class="w" x="1358" y="849.700">养护完成进度</text><text class="p" x="1581.600" y="849.700">80%</text>
<text class="w" x="1358" y="896.700">报修完成进度</text><text class="p" x="1581.600" y="896.700">95%</text>
<text class="w" x="1358" y="942.700">工单完成进度</text><text class="p" x="1581.600" y="942.700">87%</text>

<!-- 能耗 -->
<path d="M1680.500 817.300H1885M1680.500 835.800H1885M1680.500 854.300H1885M1680.500 872.800H1885M1680.500 891.300H1885M1680.500 909.800H1885M1680.500 928.300H1885" class="grid" style="stroke:#142a6c"/>
<g fill="#32a0e0"><rect x="1693.300" y="872.700" width="8.800" height="74"/><rect x="1727" y="866.300" width="8.800" height="80.400"/><rect x="1760.600" y="872.700" width="8.800" height="74"/><rect x="1794.600" y="854" width="8.800" height="92.700"/><rect x="1828.600" y="841.700" width="8.800" height="105"/><rect x="1863" y="860.300" width="8.800" height="86.400"/></g>
<path d="M1680.500 817V946.700H1885M1680.500 946.700v5M1714.500 946.700v5M1748.500 946.700v5M1782.500 946.700v5" stroke="#12b0a0" fill="none"/>
<polyline points="1697.700,866.300 1731.400,860 1765,866.300 1799,847.700 1833,829 1867.400,854" fill="none" stroke="#ffb800" stroke-width="1.800"/>
<g fill="#ffb800"><circle cx="1697.700" cy="866.300" r="3"/><circle cx="1731.400" cy="860" r="3"/><circle cx="1765" cy="866.300" r="3"/><circle cx="1799" cy="847.700" r="3"/><circle cx="1833" cy="829" r="3"/><circle cx="1867.400" cy="854" r="3"/></g>
<text class="axm" x="1680" y="795" style="font-size:12px">(万m)</text>
<text class="axe" x="1672" y="816">2,100</text><text class="axe" x="1672" y="834.500">1,800</text><text class="axe" x="1672" y="853">1,500</text><text class="axe" x="1672" y="871.500">1,200</text><text class="axe" x="1672" y="890">900</text><text class="axe" x="1672" y="908.500">600</text><text class="axe" x="1672" y="927">300</text><text class="axe" x="1672" y="946">0</text>
<text class="axm" x="1697.700" y="959.500">1月</text><text class="axm" x="1731.400" y="959.500">2月</text><text class="axm" x="1765" y="959.500">3月</text><text class="axm" x="1799" y="959.500">4月</text><text class="axm" x="1833" y="959.500">5月</text><text class="axm" x="1867.400" y="959.500">6月</text>
<rect x="1778.700" y="783" width="12" height="8" fill="#32a0e0"/><text class="lg" x="1795.500" y="787">松江区</text>
<rect x="1835" y="783" width="12" height="8" fill="#ffb800"/><text class="lg" x="1852.400" y="787">宝山区</text>

<!-- IME status overlay -->
<rect x="1793.600" y="940" width="118.400" height="18" fill="#fff"/>
<text x="1798" y="950" style="font-family:'Liberation Mono','Noto Sans CJK SC',monospace;font-size:15px;font-weight:bold;fill:#f03a90">body{</text>
<text x="1849" y="949" style="font-size:14px;font-weight:bold;fill:#1010f0">中</text>
<text x="1869" y="948" style="font-size:13px;font-weight:bold;fill:#1010f0">°,</text>
<text x="1888" y="949" style="font-size:14px;font-weight:bold;fill:#1010f0">半</text>
<text x="1904" y="950" style="font-family:'Liberation Mono',monospace;font-size:15px;font-weight:bold;fill:#f03a90">}</text>
</svg>
</body></html>
